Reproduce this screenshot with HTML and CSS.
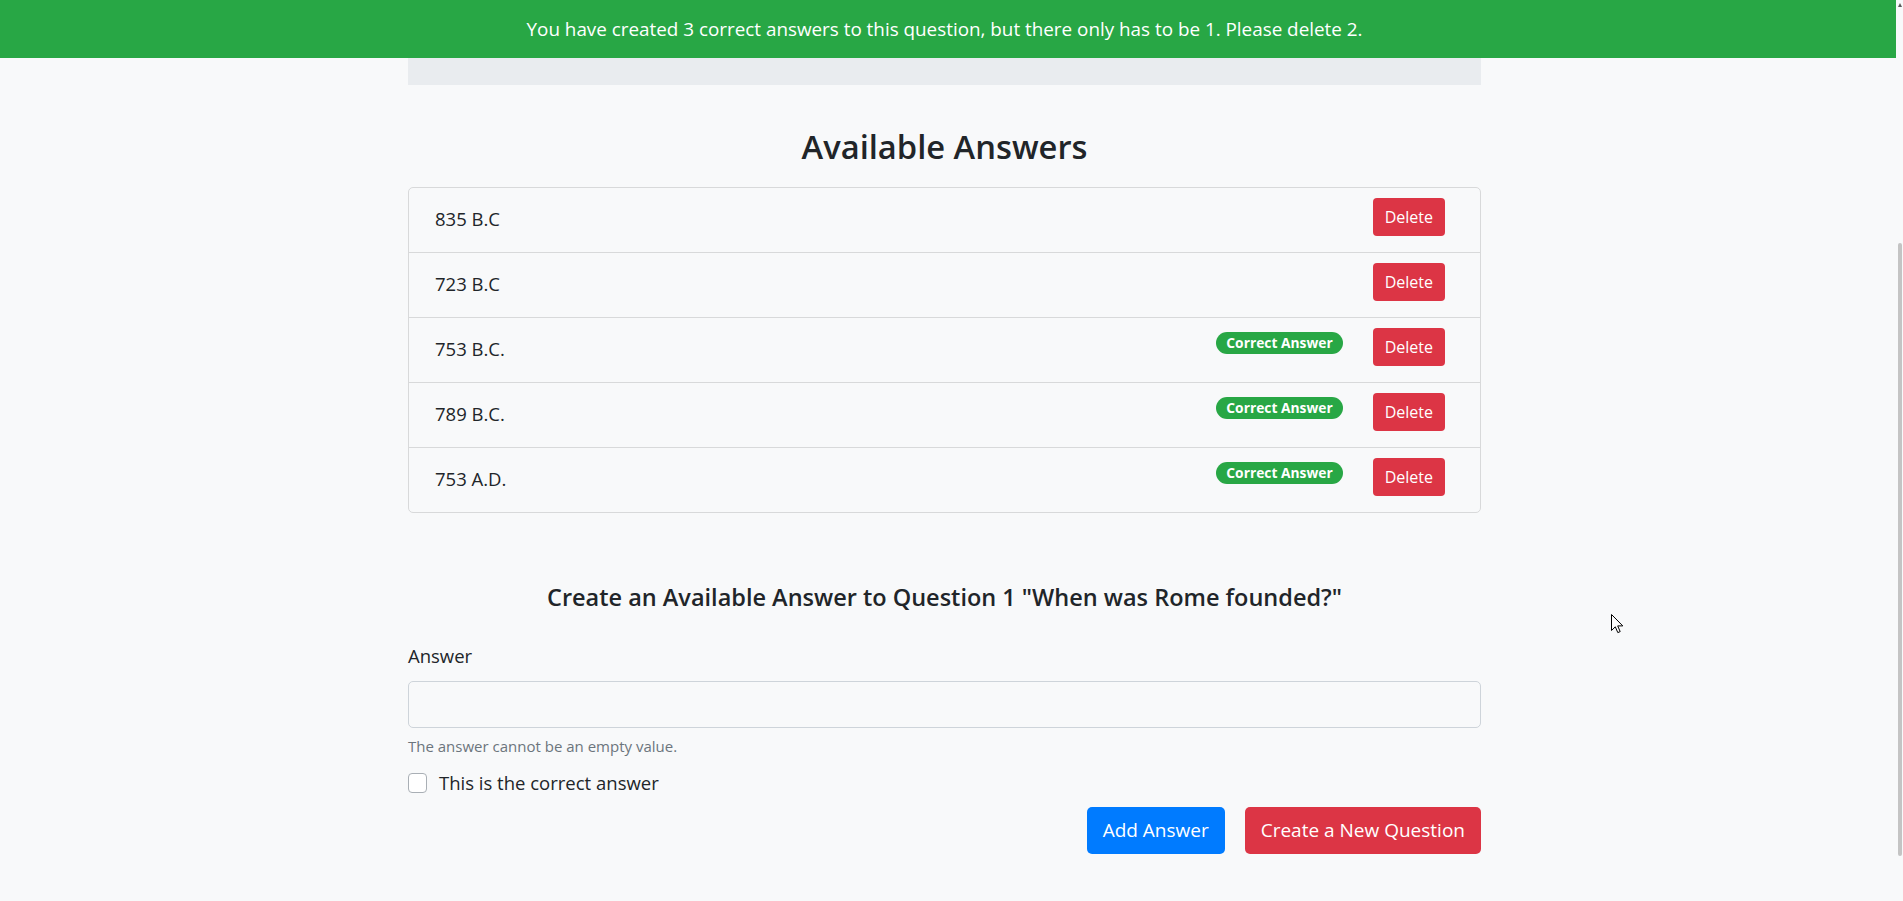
FILE: index.html
```html
<!DOCTYPE html>
<html lang="en">
<head>
<meta charset="utf-8">
<title>Available Answers</title>
<link rel="stylesheet" href="styles.css">
</head>
<body>
<div class="alert">You have created 3 correct answers to this question, but there only has to be 1. Please delete 2.</div>
<main class="page">
  <div class="jumbo"></div>
  <h1 class="title">Available Answers</h1>
  <ul class="answers">
    <li class="answer"><span class="answer-text">835 B.C</span><button class="btn btn-danger btn-delete">Delete</button></li>
    <li class="answer"><span class="answer-text">723 B.C</span><button class="btn btn-danger btn-delete">Delete</button></li>
    <li class="answer"><span class="answer-text">753 B.C.</span><span class="badge">Correct Answer</span><button class="btn btn-danger btn-delete">Delete</button></li>
    <li class="answer"><span class="answer-text">789 B.C.</span><span class="badge">Correct Answer</span><button class="btn btn-danger btn-delete">Delete</button></li>
    <li class="answer"><span class="answer-text">753 A.D.</span><span class="badge">Correct Answer</span><button class="btn btn-danger btn-delete">Delete</button></li>
  </ul>
  <h4 class="form-title">Create an Available Answer to Question 1 "When was Rome founded?"</h4>
  <form class="form">
    <label class="field-label" for="answer">Answer</label>
    <input class="field-input" id="answer" type="text">
    <small class="hint">The answer cannot be an empty value.</small>
    <label class="check"><span class="check-box"></span><span>This is the correct answer</span></label>
    <div class="actions">
      <button type="button" class="btn btn-primary btn-lg">Add Answer</button>
      <button type="button" class="btn btn-danger btn-lg">Create a New Question</button>
    </div>
  </form>
</main>
<div class="scroll-arrow"></div>
<div class="scroll-thumb"></div>
<svg class="cursor" width="14" height="21" viewBox="0 0 14 21"><path d="M0.5 0.5 L0.5 16.5 L4.3 12.8 L6.8 18.6 L9.2 17.6 L6.7 11.9 L11.8 11.9 Z" fill="#fff" stroke="#000" stroke-width="1"/></svg>
</body>
</html>
```

FILE: styles.css
```css
* { box-sizing: border-box; }

html, body {
  margin: 0;
  background: #f8f9fa;
}

body {
  font-family: "Open Sans", "Liberation Sans", sans-serif;
  color: #212529;
  padding-right: 14px;
}

.alert {
  position: fixed;
  top: 0;
  left: 0;
  right: 7px;
  height: 58px;
  padding: 1px 7px 0 0;
  background: #28a745;
  color: #fff;
  font-size: 18.85px;
  line-height: 57px;
  text-align: center;
  z-index: 10;
}

.page {
  width: 1073px;
  margin: 0 auto;
}

.jumbo {
  height: 85px;
  background: #e9ecef;
}

.title {
  margin: 42px 0 20px;
  font-size: 32.7px;
  font-weight: 600;
  line-height: 40px;
  text-align: center;
}

.answers {
  list-style: none;
  margin: 0;
  padding: 0;
  border: 1px solid #d8d9da;
  border-radius: 5px;
}

.answer {
  display: flex;
  align-items: center;
  height: 64px;
  padding: 0 35px 0 26px;
  font-size: 18.5px;
  line-height: 27px;
}

.answer + .answer {
  border-top: 1px solid #d8d9da;
  height: 65px;
}

.answer-text {
  flex: 1;
  padding-bottom: 3px;
}

.badge {
  height: 22px;
  padding: 0 10px;
  margin: 0 30px 14px 0;
  border-radius: 11px;
  background: #28a745;
  color: #fff;
  font-size: 13.8px;
  font-weight: 700;
  line-height: 22px;
}

.btn {
  font-family: inherit;
  border: 0;
  color: #fff;
  cursor: pointer;
}

.btn-danger { background: #dc3545; }
.btn-primary { background: #007bff; }

.btn-delete {
  height: 38.5px;
  padding: 0 12px;
  margin-bottom: 6px;
  border-radius: 4px;
  font-size: 16px;
  line-height: 38px;
}

.btn-lg {
  height: 47px;
  padding: 0 16px;
  border-radius: 5px;
  font-size: 19px;
  line-height: 47px;
}

.form-title {
  margin: 70px 0 0;
  font-size: 23.5px;
  font-weight: 600;
  line-height: 29px;
  text-align: center;
}

.form {
  margin: 0;
}

.field-label {
  display: block;
  margin-top: 30px;
  font-size: 18.5px;
  line-height: 27px;
}

.field-input {
  display: block;
  width: 100%;
  height: 47px;
  margin-top: 12px;
  border: 1px solid #ced4da;
  border-radius: 5px;
  background: #f8f9fa;
  font-family: inherit;
  font-size: 18px;
  padding: 0 12px;
}

.hint {
  display: block;
  margin-top: 7px;
  font-size: 15px;
  line-height: 22px;
  color: #6c757d;
}

.check {
  display: flex;
  align-items: center;
  margin-top: 12px;
  font-size: 18.5px;
  line-height: 27px;
}

.check-box {
  width: 19px;
  height: 20px;
  margin-right: 12px;
  border: 1px solid #a9afb5;
  border-radius: 4px;
  background: #fff;
}

.actions {
  display: flex;
  justify-content: flex-end;
  gap: 20px;
  margin-top: 11px;
}

.scroll-thumb {
  position: fixed;
  top: 243px;
  right: 1px;
  width: 4px;
  height: 613px;
  border-radius: 2px;
  background: #c4c4c4;
}

.scroll-arrow {
  position: fixed;
  top: 3px;
  right: 1px;
  width: 0;
  height: 0;
  border-left: 2.5px solid transparent;
  border-right: 2.5px solid transparent;
  border-bottom: 4px solid #5a5a5a;
}

.cursor {
  position: fixed;
  left: 1611px;
  top: 614px;
}
```
